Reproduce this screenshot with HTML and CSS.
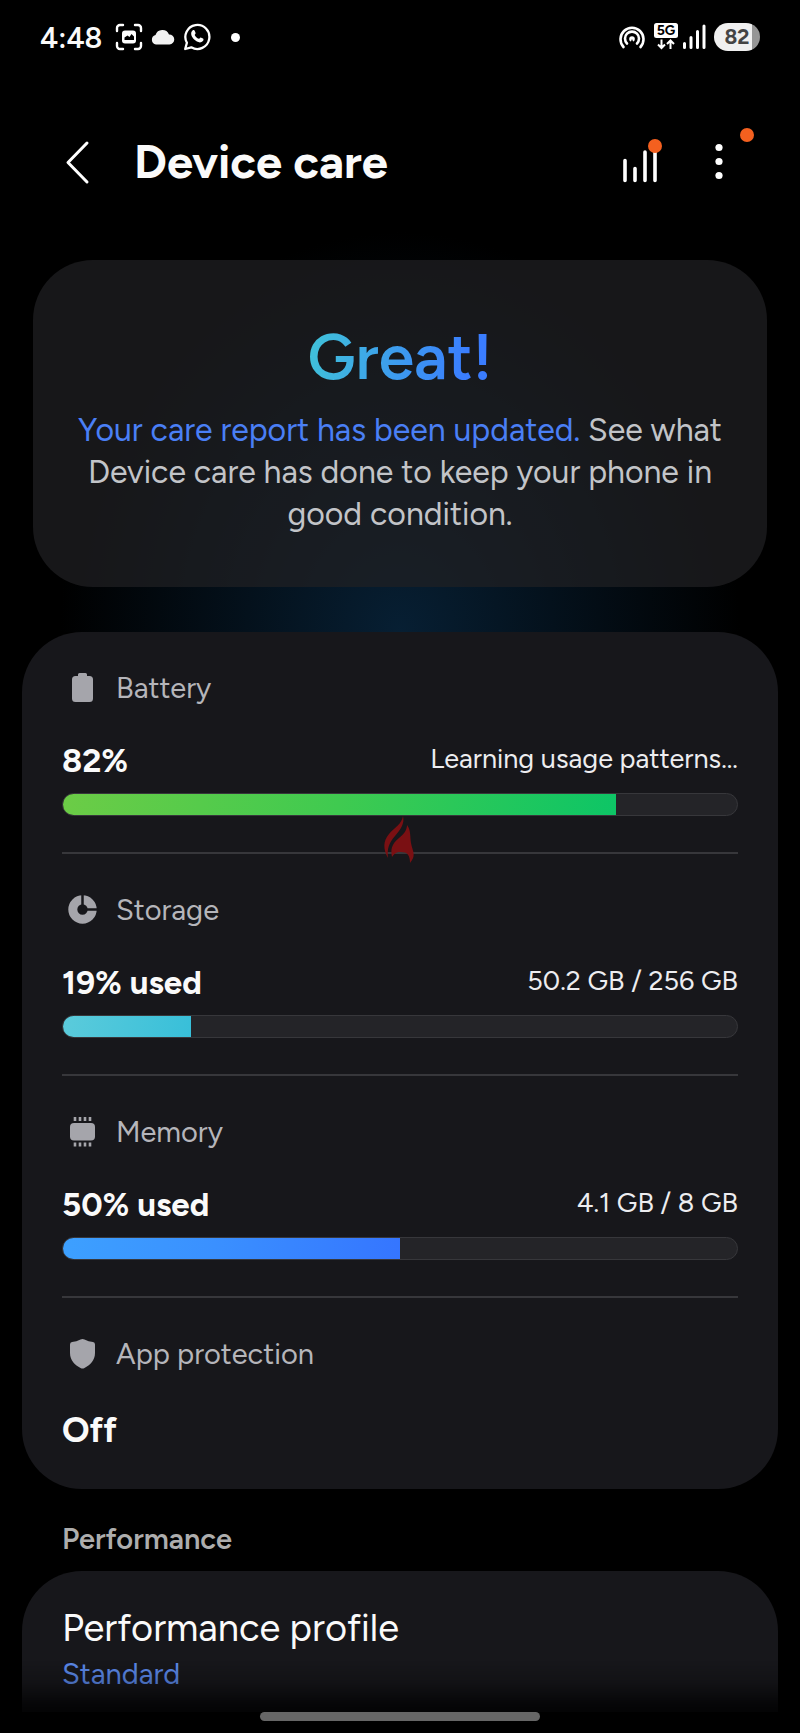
FILE: index.html
```html
<!DOCTYPE html>
<html lang="en">
<head>
    <meta charset="UTF-8">
    <meta name="viewport" content="width=device-width, initial-scale=1.0">
    <title>Device care</title>
    <link rel="stylesheet" href="styles.css">
</head>
<body>
    <div class="status-bar">
        <div class="status-left">
            <span class="clock">4:48</span>
            <svg width="28" height="28" viewBox="0 0 28 28">
                <path d="M2 8V5a3 3 0 0 1 3-3h3M20 2h3a3 3 0 0 1 3 3v3M26 20v3a3 3 0 0 1-3 3h-3M8 26H5a3 3 0 0 1-3-3v-3" fill="none" stroke="#fff" stroke-width="2.4" stroke-linecap="round"/>
                <rect x="7" y="7.500" width="14" height="13" rx="3" fill="#fff"/>
                <path d="M9.500 17v-2.500l3-2 2 1.500 2-3 2.500 2.500V17z" fill="#000"/>
            </svg>
            <svg width="24" height="28" viewBox="0 0 24 28">
                <path d="M5 21.500a4.800 4.800 0 0 1-.5-9.400A7.200 7.200 0 0 1 18 11.500a5 5 0 0 1 .5 10z" fill="#f2f2f2"/>
            </svg>
            <svg width="28" height="28" viewBox="0 0 28 28">
                <path d="M2.200 26l1.700-6.200A12 12 0 1 1 8.300 24.300z" fill="none" stroke="#fff" stroke-width="2.300" stroke-linejoin="round"/>
                <path d="M9.500 7.500c1-.8 1.900-.5 2.300.4l.8 2c.2.600-.8 1.500-.9 2 .8 1.700 2.200 3 4.100 3.900.7-.1 1.200-1.500 1.900-1.400l2.300 1.100c.8.500.6 1.700-.1 2.600-2.400 2.700-6.200.9-8.700-1.500-2.700-2.700-4.300-6.700-1.700-9.100z" fill="#fff"/>
            </svg>
            <span class="more-dot"></span>
        </div>
        <div class="status-right">
            <svg class="hotspot" width="28" height="28" viewBox="0 0 28 28">
                <g fill="none" stroke="#fff" stroke-width="2.600" stroke-linecap="round">
                    <path d="M5.500 24a11.500 11.500 0 1 1 17 0"/>
                    <path d="M9 20.500a7 7 0 1 1 10 0"/>
                </g>
                <circle cx="14" cy="16" r="2.800" fill="#fff"/>
                <path d="M14 16l-2.500 6h5z" fill="#000"/>
            </svg>
            <svg width="24" height="28" viewBox="0 0 24 28">
                <rect x="0" y="0" width="24" height="15" rx="2.500" fill="#fff"/>
                <text class="network-label" x="12" y="12" text-anchor="middle">5G</text>
                <path d="M7.500 16.500v8M4 21.500l3.500 3.500 3.500-3.500M16.500 26v-8M13 21l3.500-3.500L20 21" fill="none" stroke="#fff" stroke-width="2"/>
            </svg>
            <svg width="24" height="28" viewBox="0 0 24 28">
                <path d="M2.500 24.500v-4M9 24.500v-10M15.500 24.500V8.500M22 24.500V3" stroke="#fff" stroke-width="3" stroke-linecap="round"/>
            </svg>
            <span class="battery-pill">82</span>
        </div>
    </div>

    <header class="app-bar">
        <button class="icon-btn" type="button" aria-label="Back">
            <svg width="48" height="48" viewBox="0 0 48 48">
                <path d="M33 5L14 24.500 33 44" fill="none" stroke="#fff" stroke-width="3" stroke-linecap="round" stroke-linejoin="round"/>
            </svg>
        </button>
        <h1>Device care</h1>
        <button class="icon-btn" type="button" aria-label="Care report">
            <svg width="48" height="48" viewBox="0 0 48 48">
                <path d="M10 22.500v20M20 30.500v12M30 14v28.500M40 10v32.500" stroke="#fff" stroke-width="3.600" stroke-linecap="round"/>
            </svg>
            <span class="badge badge-report"></span>
        </button>
        <button class="icon-btn" type="button" aria-label="More options">
            <svg width="48" height="48" viewBox="0 0 48 48">
                <g fill="#fff">
                    <circle cx="24" cy="9.500" r="3.600"/>
                    <circle cx="24" cy="23.500" r="3.600"/>
                    <circle cx="24" cy="37.500" r="3.600"/>
                </g>
            </svg>
            <span class="badge badge-more"></span>
        </button>
    </header>

    <main>
        <section class="summary">
            <div class="summary-card">
                <h2>Great!</h2>
                <p><a href="#report">Your care report has been updated.</a> See what Device care has done to keep your phone in good condition.</p>
            </div>
        </section>

        <section class="card">
            <div class="item">
                <div class="item-label">
                    <svg width="36" height="36" viewBox="0 0 36 36">
                        <path d="M13 4.500q0-1.500 1.500-1.500h6Q22 3 22 4.500V6h2.500q3.500 0 3.500 3.500v19q0 3.500-3.500 3.500h-14Q7 32 7 28.500v-19Q7 6 10.500 6H13z"/>
                    </svg>
                    <span>Battery</span>
                </div>
                <div class="item-values">
                    <strong>82%</strong>
                    <span>Learning usage patterns...</span>
                </div>
                <div class="bar" role="progressbar" aria-label="Battery" aria-valuenow="82">
                    <div class="fill fill-battery" style="width: 82%"></div>
                </div>
                <!-- flame mark across the divider -->
                <svg class="flame" width="32" height="48" viewBox="0 0 32 48">
                    <path d="M20 0c2 8-3 14-8 20-6 7-8 12-7 22C0 33 0 25 6 18 11 12 19 8 20 0z"/>
                    <path d="M24 9c4 5 3 12 4 18 1 7 6 12-1 20 0-8-3-11-9-11-4 0-5 0-9 5-2-9 1-14 7-19 5-4 8-8 8-13z"/>
                </svg>
            </div>

            <div class="item">
                <div class="item-label">
                    <svg width="36" height="36" viewBox="0 0 36 36">
                        <circle class="ring" cx="17.500" cy="17.500" r="9.700"/>
                        <path class="cut" d="M17.500 17.500V2M17.500 17.500h16"/>
                    </svg>
                    <span>Storage</span>
                </div>
                <div class="item-values">
                    <strong>19% used</strong>
                    <span>50.2 GB / 256 GB</span>
                </div>
                <div class="bar" role="progressbar" aria-label="Storage" aria-valuenow="19">
                    <div class="fill fill-storage" style="width: 19%"></div>
                </div>
            </div>

            <div class="item">
                <div class="item-label">
                    <svg width="36" height="36" viewBox="0 0 36 36">
                        <rect x="5" y="9" width="25" height="17.500" rx="4"/>
                        <path class="pins" d="M10 3v4M15 3v4M20 3v4M25 3v4M10 28.500v4M15 28.500v4M20 28.500v4M25 28.500v4"/>
                    </svg>
                    <span>Memory</span>
                </div>
                <div class="item-values">
                    <strong>50% used</strong>
                    <span>4.1 GB / 8 GB</span>
                </div>
                <div class="bar" role="progressbar" aria-label="Memory" aria-valuenow="50">
                    <div class="fill fill-memory" style="width: 50%"></div>
                </div>
            </div>

            <div class="item item-last">
                <div class="item-label">
                    <svg width="36" height="36" viewBox="0 0 36 36">
                        <path d="M17.500 3q1 0 2 .5 4 2 8.500 2.500 2 .3 2 2.500v8.500c0 7.500-5 12-10.500 15q-2 1-4 0C10 29 5 24.500 5 17V8.500Q5 6.300 7 6q4.500-.5 8.500-2.500 1-.5 2-.5z"/>
                    </svg>
                    <span>App protection</span>
                </div>
                <strong class="item-state">Off</strong>
            </div>
        </section>

        <h3>Performance</h3>
        <section class="card profile">
            <div class="profile-title">Performance profile</div>
            <div class="profile-value">Standard</div>
        </section>
    </main>

    <div class="nav-fade">
        <div class="home-handle"></div>
    </div>
</body>
</html>
```

FILE: styles.css
```css
:root {
    --card: #17171b;
    --muted: #b5b5ba;
    --icon: #a5a5ab;
    --blue: #4a7ff5;
    --orange: #f4601f;
}

* {
    margin: 0;
    padding: 0;
    box-sizing: border-box;
}

body {
    background: #000;
    color: #fafafa;
    font-family: Figtree, Roboto, "Liberation Sans", sans-serif;
    min-height: 100vh;
    overflow-x: hidden;
}

svg {
    display: block;
    flex: none;
}

/* status bar */
.status-bar {
    display: flex;
    justify-content: space-between;
    align-items: center;
    height: 74px;
    padding: 0 40px;
}

.status-left,
.status-right {
    display: flex;
    align-items: center;
    gap: 8px;
}

.status-right {
    gap: 4px;
}

.clock {
    font-size: 29px;
    font-weight: 600;
    margin-right: 5px;
}

.more-dot {
    width: 9px;
    height: 9px;
    margin-left: 12px;
    border-radius: 50%;
    background: #fff;
}

.hotspot {
    margin-right: 4px;
}

.network-label {
    font-size: 14px;
    font-weight: 700;
    fill: #000;
}

.battery-pill {
    width: 46px;
    height: 28px;
    margin-left: 4px;
    border-radius: 14px;
    background: linear-gradient(90deg, #f0f0f0 82%, #959595 82%);
    color: #444;
    font-size: 21px;
    font-weight: 700;
    line-height: 28px;
    text-align: center;
}

/* app bar */
.app-bar {
    display: flex;
    align-items: center;
    gap: 32px;
    height: 176px;
    padding: 0 57px 0 54px;
}

h1 {
    flex: 1;
    font-size: 47px;
    font-weight: 700;
    line-height: 56px;
}

.icon-btn {
    position: relative;
    width: 48px;
    height: 48px;
    border: none;
    background: none;
}

.badge {
    position: absolute;
    width: 14px;
    height: 14px;
    border-radius: 50%;
    background: var(--orange);
}

.badge-report {
    top: 1px;
    right: 1px;
}

.badge-more {
    top: -10px;
    right: -11px;
}

/* summary */
.summary {
    margin-top: -40px;
    padding: 50px 33px 45px;
    background: radial-gradient(ellipse 340px 400px at 50% 100%, #071f33, #04111c 45%, transparent);
}

.summary-card {
    padding: 59px 40px 52px;
    border-radius: 60px;
    background: rgba(32, 32, 34, 0.72);
    text-align: center;
}

h2 {
    display: inline-block;
    background: linear-gradient(100deg, #40c4d8, #3a7dff 85%);
    background-clip: text;
    -webkit-background-clip: text;
    color: transparent;
    font-size: 64px;
    font-weight: 600;
    line-height: 76px;
    margin-bottom: 14px;
}

.summary p {
    color: #c2c4c8;
    font-size: 32px;
    line-height: 42px;
}

.summary a {
    color: var(--blue);
    text-decoration: none;
}

/* cards */
.card {
    margin: 0 22px;
    padding: 0 40px;
    border-radius: 60px;
    background: var(--card);
}

.item {
    position: relative;
    padding: 38px 0 36px;
    border-bottom: 2px solid #37373b;
}

.item-last {
    padding-bottom: 35px;
    border-bottom: none;
}

.item-label {
    display: flex;
    align-items: center;
    gap: 15px;
    margin-bottom: 34px;
    padding-left: 3px;
    color: var(--muted);
    font-size: 29px;
    line-height: 36px;
}

.item-label svg {
    fill: var(--icon);
}

.item-label .ring {
    fill: none;
    stroke: var(--icon);
    stroke-width: 9;
}

.item-label .cut {
    stroke: var(--card);
    stroke-width: 2.5;
}

.item-label .pins {
    stroke: var(--icon);
    stroke-width: 2.6;
}

.item-values {
    display: flex;
    justify-content: space-between;
    height: 40px;
    margin-bottom: 13px;
    font-size: 27px;
    line-height: 38px;
}

.item-values span {
    color: #ededf0;
}

.item-values strong {
    font-size: 33px;
    line-height: 42px;
}

.bar {
    height: 23px;
    overflow: hidden;
    border: 1px solid #37373b;
    border-radius: 12px;
    background: #242428;
}

.fill {
    height: 100%;
}

.fill-battery {
    background: linear-gradient(100deg, #6ccc46, #3fca50 50%, #0dc566);
}

.fill-storage {
    background: linear-gradient(100deg, #5bcbdb, #38bfd9);
}

.fill-memory {
    background: linear-gradient(100deg, #3da0ff, #3a90ff 45%, #3575ff);
}

.item-state {
    display: block;
    font-size: 35px;
    line-height: 48px;
}

.flame {
    position: absolute;
    bottom: -12px;
    left: 50%;
    margin-left: -17px;
    fill: #7a1013;
}

/* performance */
h3 {
    margin: 30px 62px 12px;
    color: #adadad;
    font-size: 29px;
    font-weight: 600;
    line-height: 40px;
}

.profile {
    padding-top: 33px;
    padding-bottom: 20px;
    border-radius: 60px 60px 0 0;
}

.profile-title {
    font-size: 38px;
    line-height: 48px;
}

.profile-value {
    margin-top: 4px;
    color: #5b88e8;
    font-size: 29px;
    line-height: 36px;
}

.nav-fade {
    position: fixed;
    right: 0;
    bottom: 0;
    left: 0;
    display: flex;
    justify-content: center;
    align-items: flex-end;
    height: 72px;
    padding-bottom: 12px;
    background: linear-gradient(transparent, rgba(0, 0, 0, 0.2) 30%, rgba(0, 0, 0, 0.7) 60%, #000 90%);
}

.home-handle {
    width: 35%;
    height: 9px;
    border-radius: 5px;
    background: #666;
}
```
